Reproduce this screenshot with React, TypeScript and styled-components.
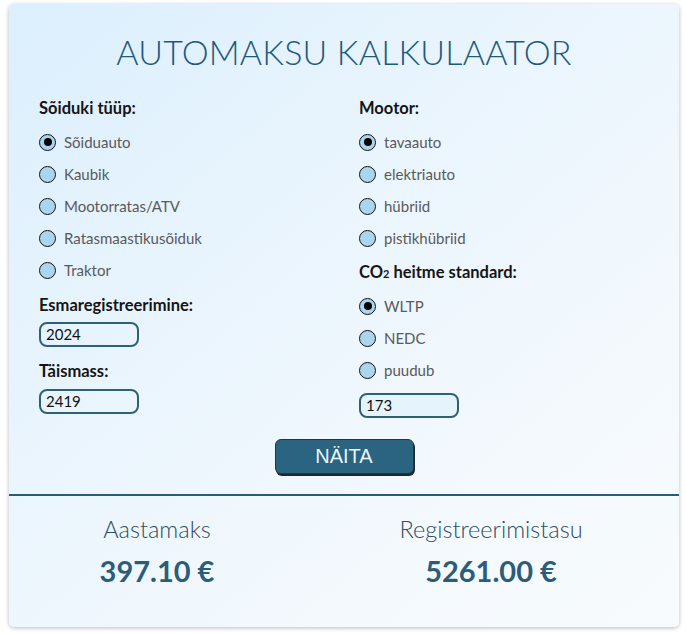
import React from "react";
import styled, { createGlobalStyle } from "styled-components";

const Global = createGlobalStyle`
  html, body { margin: 0; padding: 0; background: #ffffff; }
  body { font-family: Lato, "Open Sans", sans-serif; }
  * { box-sizing: border-box; }
`;

const Page = styled.div`
  padding: 4px 0 0 9px;
  width: 686px;
  height: 635px;
`;

const Card = styled.div`
  width: 670px;
  height: 623px;
  border-radius: 5px;
  background: linear-gradient(140deg, #dbeffd 0%, #eaf5fd 40%, #f4f9fd 75%, #f7fbfe 100%);
  box-shadow: 0 1px 4px rgba(0, 0, 0, 0.28);
  display: flex;
  flex-direction: column;
  overflow: hidden;
`;

const Title = styled.h1`
  margin: 28px 0 0;
  height: 40px;
  line-height: 40px;
  text-align: center;
  font-weight: 300;
  font-size: 34px;
  color: #1d5a7e;
  letter-spacing: 0.2px;
`;

const Columns = styled.div`
  display: grid;
  grid-template-columns: 320px 320px;
  padding-left: 30px;
  margin-top: 25px;
`;

const Column = styled.div`
  display: flex;
  flex-direction: column;
`;

const Label = styled.div<{ $top?: number }>`
  height: 22px;
  line-height: 22px;
  font-size: 16.5px;
  font-weight: 700;
  color: #151515;
  margin-top: ${(p) => p.$top ?? 0}px;
  margin-bottom: 7px;
`;

const Sub = styled.span`
  font-size: 11px;
`;

const RadioRow = styled.label`
  display: flex;
  align-items: center;
  height: 32px;
  gap: 8px;
  font-size: 15px;
  color: #5a5a5a;
`;

const Circle = styled.span<{ $on: boolean }>`
  width: 17px;
  height: 17px;
  border-radius: 50%;
  border: 1.5px solid #111;
  background: #a9d5ef;
  display: flex;
  align-items: center;
  justify-content: center;
  &::after {
    content: "";
    display: ${(p) => (p.$on ? "block" : "none")};
    width: 8px;
    height: 8px;
    border-radius: 50%;
    background: #000;
  }
`;

const Input = styled.div<{ $top?: number; $fill?: boolean }>`
  width: 100px;
  height: 25px;
  border: 2px solid #2f6176;
  border-radius: 8px;
  padding-left: 5px;
  line-height: 21px;
  font-size: 15px;
  color: #111;
  background: ${(p) => (p.$fill ? "#e4f3fc" : "transparent")};
  margin-top: ${(p) => p.$top ?? 0}px;
`;

const ButtonWrap = styled.div`
  display: flex;
  justify-content: center;
  margin-top: 21px;
`;

const Button = styled.button`
  width: 139px;
  height: 35px;
  background: #2a6480;
  border: 1.5px solid #1d3945;
  border-radius: 6px;
  box-shadow: 1px 2px 0 #1b2a31;
  color: #eaf6fc;
  font-family: "Liberation Sans", Arial, sans-serif;
  font-size: 20px;
  padding: 0;
`;

const Divider = styled.div`
  height: 2px;
  background: #2b5d72;
  margin-top: 20px;
`;

const Results = styled.div`
  display: grid;
  grid-template-columns: 296px 372px;
  margin-top: 18px;
`;

const Result = styled.div`
  display: flex;
  flex-direction: column;
  align-items: center;
`;

const ResultLabel = styled.div`
  height: 30px;
  line-height: 30px;
  font-size: 23.5px;
  font-weight: 300;
  color: #2e4d5f;
`;

const ResultValue = styled.div`
  margin-top: 9px;
  height: 36px;
  line-height: 36px;
  font-size: 29px;
  font-weight: 700;
  color: #2c5d78;
`;

const Radio = ({ label, on }: { label: string; on?: boolean }) => (
  <RadioRow>
    <Circle $on={!!on} />
    {label}
  </RadioRow>
);

export default function App() {
  return (
    <>
      <Global />
      <Page>
        <Card>
          <Title>AUTOMAKSU KALKULAATOR</Title>
          <Columns>
            <Column>
              <Label>Sõiduki tüüp:</Label>
              <Radio label="Sõiduauto" on />
              <Radio label="Kaubik" />
              <Radio label="Mootorratas/ATV" />
              <Radio label="Ratasmaastikusõiduk" />
              <Radio label="Traktor" />
              <Label $top={8}>Esmaregistreerimine:</Label>
              <Input $top={-1}>2024</Input>
              <Label $top={13}>Täismass:</Label>
              <Input>2419</Input>
            </Column>
            <Column>
              <Label>Mootor:</Label>
              <Radio label="tavaauto" on />
              <Radio label="elektriauto" />
              <Radio label="hübriid" />
              <Radio label="pistikhübriid" />
              <Label $top={7}>
                CO<Sub>2</Sub> heitme standard:
              </Label>
              <Radio label="WLTP" on />
              <Radio label="NEDC" />
              <Radio label="puudub" />
              <Input $top={7} $fill>173</Input>
            </Column>
          </Columns>
          <ButtonWrap>
            <Button>NÄITA</Button>
          </ButtonWrap>
          <Divider />
          <Results>
            <Result>
              <ResultLabel>Aastamaks</ResultLabel>
              <ResultValue>397.10 €</ResultValue>
            </Result>
            <Result>
              <ResultLabel>Registreerimistasu</ResultLabel>
              <ResultValue>5261.00 €</ResultValue>
            </Result>
          </Results>
        </Card>
      </Page>
    </>
  );
}
